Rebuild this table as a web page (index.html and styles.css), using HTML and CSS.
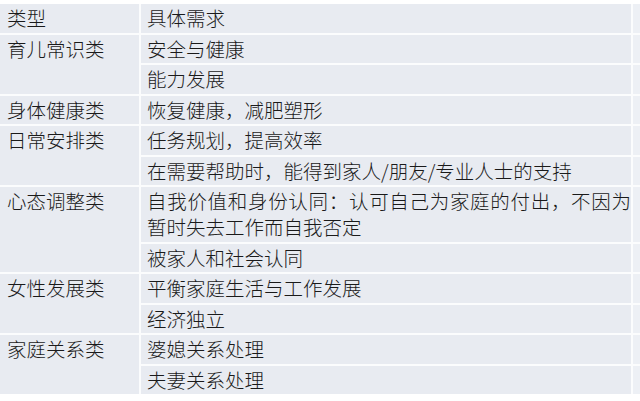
FILE: index.html
```html
<!DOCTYPE html>
<html lang="zh-CN">
<head>
<meta charset="utf-8">
<title>类型与具体需求</title>
<link rel="stylesheet" href="styles.css">
</head>
<body>
<div class="table">
  <div class="cell type">类型</div>
  <div class="cell need">具体需求</div>
  <div class="cell edge"></div>

  <div class="cell type span2">育儿常识类</div>
  <div class="cell need">安全与健康</div>
  <div class="cell edge"></div>
  <div class="cell need">能力发展</div>
  <div class="cell edge"></div>

  <div class="cell type">身体健康类</div>
  <div class="cell need">恢复健康，减肥塑形</div>
  <div class="cell edge"></div>

  <div class="cell type span2">日常安排类</div>
  <div class="cell need">任务规划，提高效率</div>
  <div class="cell edge"></div>
  <div class="cell need">在需要帮助时，能得到家人/朋友/专业人士的支持</div>
  <div class="cell edge"></div>

  <div class="cell type span2">心态调整类</div>
  <div class="cell need justify">自我价值和身份认同：认可自己为家庭的付出，不因为暂时失去工作而自我否定</div>
  <div class="cell edge"></div>
  <div class="cell need">被家人和社会认同</div>
  <div class="cell edge"></div>

  <div class="cell type span2">女性发展类</div>
  <div class="cell need">平衡家庭生活与工作发展</div>
  <div class="cell edge"></div>
  <div class="cell need">经济独立</div>
  <div class="cell edge"></div>

  <div class="cell type span2">家庭关系类</div>
  <div class="cell need">婆媳关系处理</div>
  <div class="cell edge"></div>
  <div class="cell need">夫妻关系处理</div>
  <div class="cell edge"></div>
</div>
</body>
</html>
```

FILE: styles.css
```css
html, body {
  margin: 0;
  padding: 0;
  background: #ffffff;
}

body {
  padding-top: 4px;
  font-family: "Noto Sans CJK SC", "Noto Sans", sans-serif;
  font-size: 19.5px;
  font-weight: 300;
  color: #1a1a1a;
}

.table {
  display: grid;
  grid-template-columns: 139px 490px 7px;
  gap: 2px;
  width: 640px;
  background: #fbfcfd;
}

.cell {
  background: #e8ebf1;
  line-height: 26px;
  padding: 1.25px 0;
}

.type {
  padding-left: 7px;
}

.need {
  padding-left: 6px;
}

.span2 {
  grid-row: span 2;
}

.justify {
  text-align: justify;
}

.edge {
  background: #edf0f5;
}
```
